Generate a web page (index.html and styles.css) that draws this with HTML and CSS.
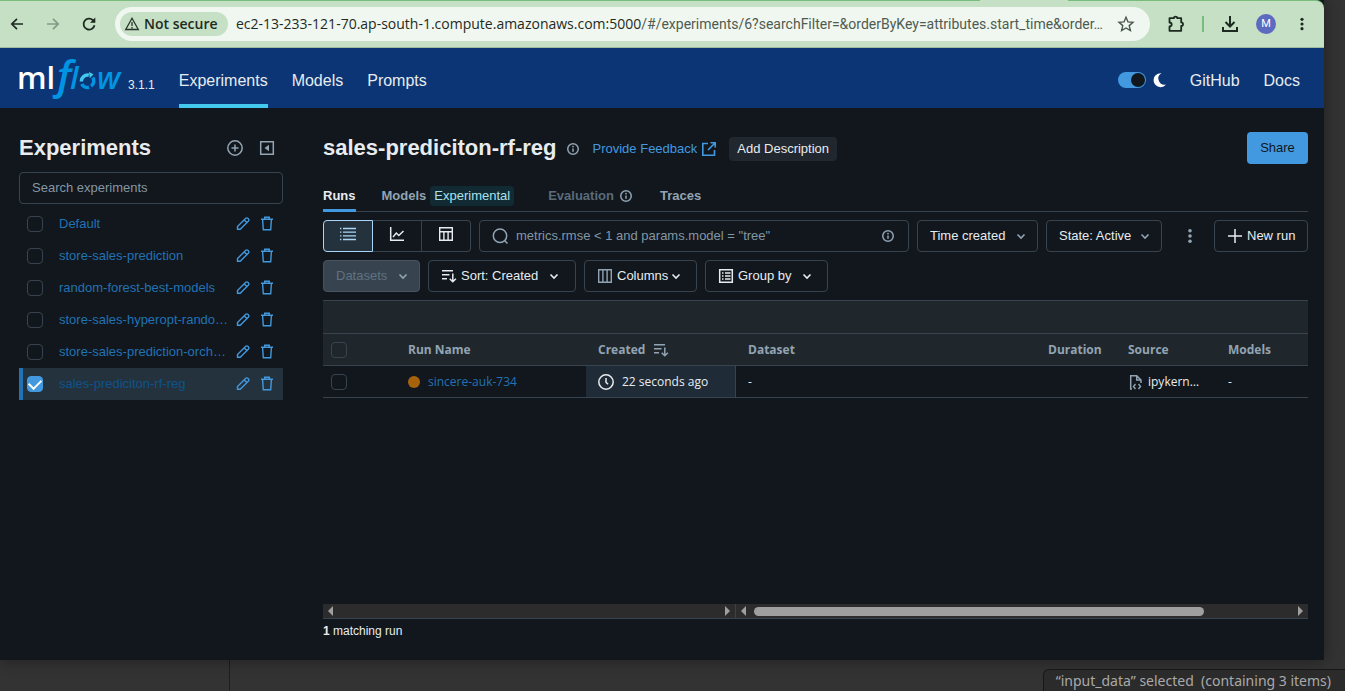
FILE: index.html
```html
<!DOCTYPE html>
<html lang="en">
<head>
<meta charset="utf-8">
<title>sales-prediciton-rf-reg - MLflow</title>
<link rel="stylesheet" href="styles.css">
</head>
<body>
<svg class="sprite" aria-hidden="true">
  <symbol id="i-info" viewBox="0 0 16 16"><circle cx="8" cy="8" r="7" fill="none" stroke="currentColor" stroke-width="2"/><path d="M8 7.200v4.300" stroke="currentColor" stroke-width="2"/><circle cx="8" cy="4.800" r="1.200" fill="currentColor"/></symbol>
  <symbol id="i-pencil" viewBox="0 0 16 16"><path d="M2.500 13.300v-2.700l8.300-8.300a1.400 1.400 0 0 1 2 0l.7.700a1.400 1.400 0 0 1 0 2l-8.300 8.300zM9.300 4l2.700 2.700" fill="none" stroke="currentColor" stroke-width="1.400"/></symbol>
  <symbol id="i-trash" viewBox="0 0 16 16"><path d="M2 3.200h12M5.700 3V1.200h4.600V3M3.600 3.500l.7 10.300h7.400l.7-10.300" fill="none" stroke="currentColor" stroke-width="1.400"/></symbol>
  <symbol id="i-chev" viewBox="0 0 16 16"><path d="M4.500 6.500 8 10l3.500-3.500" fill="none" stroke="currentColor" stroke-width="1.600"/></symbol>
  <symbol id="i-sort" viewBox="0 0 16 16"><path d="M1 2.750h11M1 6.750h7.500M1 10.750h5M11.800 5.500v8M8.700 10.700l3.100 3.100 3.100-3.100" fill="none" stroke="currentColor" stroke-width="1.500"/></symbol>
  <symbol id="i-kebab" viewBox="0 0 16 16"><circle cx="8" cy="2.700" r="1.800" fill="currentColor"/><circle cx="8" cy="8" r="1.800" fill="currentColor"/><circle cx="8" cy="13.300" r="1.800" fill="currentColor"/></symbol>
</svg>

<div class="window">
  <header class="chrome">
    <span class="tab-edge"></span>
    <button class="cbtn" aria-label="Back"><svg viewBox="0 0 16 16" width="16" height="16"><path d="M14 8H3M8 2.800 2.800 8 8 13.200" fill="none" stroke="#1d2a20" stroke-width="1.700"/></svg></button>
    <button class="cbtn" aria-label="Forward"><svg viewBox="0 0 16 16" width="16" height="16"><path d="M2 8h11M8 2.800 13.200 8 8 13.200" fill="none" stroke="#849a86" stroke-width="1.700"/></svg></button>
    <button class="cbtn" aria-label="Reload"><svg viewBox="0 0 16 16" width="16" height="16"><path d="M13.500 9.200A5.500 5.500 0 1 1 12 4.200l1.600 1.800" fill="none" stroke="#1d2a20" stroke-width="1.800"/><path d="M14.300 1.400v5.300H9z" fill="#1d2a20"/></svg></button>
    <div class="omnibox">
      <button class="chip"><svg viewBox="0 0 16 16" width="16" height="16"><path d="M8 2.300 1.700 13.500h12.600zM8 6v4M8 11v1.400" fill="none" stroke="#27332a" stroke-width="1.300"/></svg>Not secure</button>
      <span class="url">ec2-13-233-121-70.ap-south-1.compute.amazonaws.com:5000<span class="path">/#/experiments/6?searchFilter=&amp;orderByKey=attributes.start_time&amp;order…</span></span>
      <button class="cbtn star" aria-label="Bookmark"><svg viewBox="0 0 18 18" width="18" height="18"><path d="m9 2.200 2 4.700 5 .4-3.800 3.300 1.200 5L9 13l-4.400 2.600 1.200-5L2 7.300l5-.4z" fill="none" stroke="#4b564d" stroke-width="1.400"/></svg></button>
    </div>
    <button class="cbtn ext" aria-label="Extensions"><svg viewBox="0 0 20 20" width="20" height="20"><path d="M3.500 4.200h4.400c0-2.200 3.400-2.200 3.400 0h3.900v4.200c2.400 0 2.400 3.500 0 3.500v4.900H3.500v-4.300c2.900-.2 2.900-3.800 0-4z" fill="none" stroke="#1d2a20" stroke-width="1.800" stroke-linejoin="round"/></svg></button>
    <span class="divider"></span>
    <button class="cbtn dl" aria-label="Downloads"><svg viewBox="0 0 20 20" width="20" height="20"><path d="M10 2v10M5.500 8l4.500 4.500L14.500 8M3 13v4h14v-4" fill="none" stroke="#1d2a20" stroke-width="2"/></svg></button>
    <button class="avatar" aria-label="Profile">M</button>
    <button class="cbtn menu" aria-label="Menu"><svg><use href="#i-kebab"/></svg></button>
  </header>

  <nav class="nav">
    <a class="brand" href="#" aria-label="mlflow">
      <svg width="106" height="44" viewBox="0 0 106 44">
        <text class="lg-ml" x="-2" y="33">ml<tspan class="lg-f" x="34">ƒ</tspan><tspan class="lg-l" x="51">l</tspan><tspan class="lg-w" x="78">w</tspan></text>
        <g fill="none" stroke-width="3.500"><path d="M73.800 21.500a6.300 6.300 0 0 1-1.700 8.600" stroke="#0194e2"/><path d="M70 31.200a6.300 6.300 0 0 1-7.300-3.300" stroke="#0194e2"/><path d="M62.300 25.500a6.300 6.300 0 0 1 7.500-6.300" stroke="#43c9ed"/></g>
        <path d="m70 16 4.500 2.200-3.700 4z" fill="#43c9ed"/>
      </svg>
      <span class="version">3.1.1</span>
    </a>
    <a class="navlink active" href="#">Experiments</a>
    <a class="navlink" href="#">Models</a>
    <a class="navlink" href="#">Prompts</a>
    <span class="spacer"></span>
    <label class="theme"><input type="checkbox" class="switch" checked aria-label="Dark theme"><svg viewBox="0 0 16 16" width="16" height="16"><path d="M11.500 1.200A7 7 0 1 0 16 12.600 6.200 6.200 0 0 1 11.500 1.200z" fill="#fff"/></svg></label>
    <a class="navlink" href="#">GitHub</a>
    <a class="navlink" href="#">Docs</a>
  </nav>

  <div class="content">
    <aside class="side">
      <div class="side-head">
        <h2>Experiments</h2>
        <button class="ibtn" aria-label="Create experiment"><svg viewBox="0 0 16 16" width="16" height="16"><circle cx="8" cy="8" r="7.200" fill="none" stroke="currentColor" stroke-width="1.500"/><path d="M8 4.500v7M4.500 8h7" stroke="currentColor" stroke-width="1.500"/></svg></button>
        <button class="ibtn" aria-label="Hide experiments"><svg viewBox="0 0 16 16" width="16" height="16"><path d="M1.700 1.700h12.600v12.600H1.700z" fill="none" stroke="currentColor" stroke-width="1.500"/><path d="M10 4.800v6.400L5.500 8z" fill="currentColor"/></svg></button>
      </div>
      <input class="field" type="text" placeholder="Search experiments" aria-label="Search experiments">
      <ul class="exps">
        <li><input type="checkbox" aria-label="Default"><a href="#">Default</a><button aria-label="Rename"><svg><use href="#i-pencil"/></svg></button><button aria-label="Delete"><svg><use href="#i-trash"/></svg></button></li>
        <li><input type="checkbox" aria-label="store-sales-prediction"><a href="#">store-sales-prediction</a><button aria-label="Rename"><svg><use href="#i-pencil"/></svg></button><button aria-label="Delete"><svg><use href="#i-trash"/></svg></button></li>
        <li><input type="checkbox" aria-label="random-forest-best-models"><a href="#">random-forest-best-models</a><button aria-label="Rename"><svg><use href="#i-pencil"/></svg></button><button aria-label="Delete"><svg><use href="#i-trash"/></svg></button></li>
        <li><input type="checkbox" aria-label="store-sales-hyperopt"><a href="#">store-sales-hyperopt-rando…</a><button aria-label="Rename"><svg><use href="#i-pencil"/></svg></button><button aria-label="Delete"><svg><use href="#i-trash"/></svg></button></li>
        <li><input type="checkbox" aria-label="store-sales-prediction-orch"><a href="#">store-sales-prediction-orch…</a><button aria-label="Rename"><svg><use href="#i-pencil"/></svg></button><button aria-label="Delete"><svg><use href="#i-trash"/></svg></button></li>
        <li class="sel"><input type="checkbox" checked aria-label="sales-prediciton-rf-reg"><a href="#">sales-prediciton-rf-reg</a><button aria-label="Rename"><svg><use href="#i-pencil"/></svg></button><button aria-label="Delete"><svg><use href="#i-trash"/></svg></button></li>
      </ul>
    </aside>

    <main class="main">
      <div class="title">
        <h1>sales-prediciton-rf-reg</h1>
        <svg class="info"><use href="#i-info"/></svg>
        <a class="feedback" href="#">Provide Feedback <svg viewBox="0 0 16 16" width="16" height="16"><path d="M7 2.500H1.800v11.700h11.700V9M9.500 1.800h4.700v4.700M14 2 7 9" fill="none" stroke="currentColor" stroke-width="1.600"/></svg></a>
        <button class="desc">Add Description</button>
        <span class="spacer"></span>
        <button class="share">Share</button>
      </div>
      <div class="tabs" role="tablist">
        <a class="tab on" role="tab" href="#">Runs</a>
        <a class="tab" role="tab" href="#">Models <span class="tag">Experimental</span></a>
        <a class="tab off" role="tab" href="#">Evaluation <svg class="info"><use href="#i-info"/></svg></a>
        <a class="tab" role="tab" href="#">Traces</a>
      </div>
      <div class="bar">
        <div class="seg">
          <button class="on" aria-label="Table view"><svg viewBox="0 0 16 16" width="16" height="16"><path d="M3 2.500h13M3 6.200h13M3 9.800h13M3 13.500h13" stroke="currentColor" stroke-width="1.300"/><path d="M0 2.500h1.400M0 6.200h1.400M0 9.800h1.400M0 13.500h1.400" stroke="currentColor" stroke-width="1.300"/></svg></button>
          <button aria-label="Chart view"><svg viewBox="0 0 16 16" width="16" height="16"><path d="M1.700 1v13.300H15M4 11l3.300-4 2.500 2.500L14.500 5" fill="none" stroke="currentColor" stroke-width="1.500"/></svg></button>
          <button aria-label="Artifact view"><svg viewBox="0 0 16 16" width="16" height="16"><path d="M1.700 1.700h12.600v12.600H1.700zM1.700 5.700h12.600M5.900 5.700v8.600M10.100 5.700v8.600" fill="none" stroke="currentColor" stroke-width="1.400"/></svg></button>
        </div>
        <label class="search">
          <svg viewBox="0 0 16 16" width="16" height="16"><circle cx="8" cy="7.700" r="6.700" fill="none" stroke="currentColor" stroke-width="1.500"/><path d="m12.500 12.500 3 3" stroke="currentColor" stroke-width="1.500"/></svg>
          <input type="text" placeholder='metrics.rmse &lt; 1 and params.model = "tree"' aria-label="Search runs">
          <svg class="info"><use href="#i-info"/></svg>
        </label>
        <span class="pick time"><select aria-label="Time created"><option>Time created</option></select><svg><use href="#i-chev"/></svg></span>
        <span class="pick state"><select aria-label="State"><option>State: Active</option></select><svg><use href="#i-chev"/></svg></span>
        <button class="kebab" aria-label="More"><svg><use href="#i-kebab"/></svg></button>
        <button class="btn new"><svg viewBox="0 0 16 16"><path d="M8 1v14M1 8h14" stroke="currentColor" stroke-width="1.500"/></svg>New run</button>
      </div>
      <div class="bar">
        <button class="btn datasets" disabled>Datasets<svg><use href="#i-chev"/></svg></button>
        <button class="btn sort"><svg><use href="#i-sort"/></svg>Sort: Created<svg class="end"><use href="#i-chev"/></svg></button>
        <button class="btn cols"><svg class="dim" viewBox="0 0 16 16"><path d="M1.700 1.700h12.600v12.600H1.700zM5.900 1.700v12.600M10.100 1.700v12.600" fill="none" stroke="currentColor" stroke-width="1.400"/></svg>Columns<svg class="tight"><use href="#i-chev"/></svg></button>
        <button class="btn group"><svg viewBox="0 0 16 16"><path d="M1.700 1.700h12.600v12.600H1.700z" fill="none" stroke="currentColor" stroke-width="1.500"/><path d="M4 5h1.500M7 5h5.500M4 8h1.500M7 8h5.500M4 11h1.500M7 11h5.500" stroke="currentColor" stroke-width="1.400"/></svg>Group by<svg class="end"><use href="#i-chev"/></svg></button>
      </div>
      <div class="grid">
        <table>
          <colgroup><col class="c-check"><col class="c-name"><col class="c-created"><col class="c-data"><col class="c-dur"><col class="c-src"><col></colgroup>
          <thead>
            <tr class="blank"><td colspan="7"></td></tr>
            <tr><th class="check"><input type="checkbox" aria-label="Select all runs"></th><th>Run Name</th><th><span class="cell">Created<svg><use href="#i-sort"/></svg></span></th><th>Dataset</th><th>Duration</th><th>Source</th><th>Models</th></tr>
          </thead>
          <tbody>
            <tr><td class="check"><input type="checkbox" aria-label="Select run"></td><td><span class="cell"><span class="dot"></span><a href="#">sincere-auk-734</a></span></td><td class="hot"><span class="cell"><svg viewBox="0 0 16 16"><circle cx="8" cy="8" r="7.200" fill="none" stroke="currentColor" stroke-width="1.500"/><path d="M8 4v4.300l2 2" fill="none" stroke="currentColor" stroke-width="1.500"/></svg>22 seconds ago</span></td><td>-</td><td></td><td><span class="cell src"><svg viewBox="0 0 16 16"><path d="M4 15H2.700V1.700h6L13 6v3M8.700 1.700V6H13" fill="none" stroke="currentColor" stroke-width="1.500"/><path d="M7.500 10 5.500 12.500l2 2.500M10.500 10l2 2.500-2 2.500" fill="none" stroke="currentColor" stroke-width="1.400"/></svg>ipykern…</span></td><td>-</td></tr>
          </tbody>
        </table>
      </div>
      <div class="scrolls" aria-hidden="true">
        <div class="sb pinned"><i class="l"></i><span></span><i class="r"></i></div>
        <div class="sb"><i class="l"></i><span><b></b></span><i class="r"></i></div>
      </div>
      <p class="count"><strong>1</strong> matching run</p>
    </main>
  </div>
</div>
<footer class="desk">
  <span class="pane"></span>
  <span class="status">“input_data” selected&nbsp; (containing 3 items)</span>
</footer>
</body>
</html>
```

FILE: styles.css
```css
* { box-sizing: border-box; }
body {
  margin: 0;
  min-height: 100vh;
  display: flex;
  flex-direction: column;
  background: #333;
  color: #e8ecf0;
  font: 13px/20px "Liberation Sans", Arial, sans-serif;
}
button, input, select { font: inherit; color: inherit; }
button { border: 0; padding: 0; background: none; }
a { color: inherit; text-decoration: none; }
svg { flex: none; width: 16px; height: 16px; display: block; }
h1, h2, p, ul { margin: 0; padding: 0; }
h1, h2 { font-size: 22px; line-height: 28px; font-weight: 700; }
.sprite { display: none; }
.spacer { flex: 1; }

.window {
  flex: 1;
  margin-right: 21px;
  display: flex;
  flex-direction: column;
  background: #11171c;
  box-shadow: 0 0 16px rgba(0, 0, 0, 0.4);
  position: relative;
}

/* browser toolbar */
.chrome {
  position: relative;
  height: 48px;
  display: flex;
  align-items: center;
  padding: 0 14px 0 9px;
  background: #c6e0c6;
  border-top: 1px solid #78bd7b;
  border-bottom: 1px solid #9dbb9f;
  border-radius: 0 8px 0 0;
}
.tab-edge { position: absolute; top: -1px; right: 256px; width: 88px; height: 1px; background: #c6e0c6; }
.cbtn { display: flex; align-items: center; justify-content: center; width: 16px; height: 24px; margin-right: 20px; }
.cbtn svg { width: auto; height: auto; }
.cbtn.menu { margin-right: 0; color: #1d2a20; }
.menu svg { width: 14px; height: 14px; }
.omnibox {
  flex: 1;
  min-width: 0;
  height: 34px;
  margin-right: 16px;
  margin-left: -2px;
  padding: 0 14px 0 5px;
  display: flex;
  align-items: center;
  border-radius: 17px;
  background: #f0f7f0;
  color: #1f2a22;
  font-family: "Open Sans", sans-serif;
  font-size: 14px;
}
.chip {
  width: 108px;
  height: 24px;
  display: flex;
  align-items: center;
  gap: 4px;
  padding-left: 4px;
  margin-right: 8px;
  border-radius: 12px;
  background: #c6e0c6;
  font-weight: 600;
  white-space: nowrap;
}
.url { flex: 1; min-width: 0; overflow: hidden; white-space: nowrap; }
.url .path { color: #4f5b51; font-family: Roboto, sans-serif; }
.omnibox .star { width: 20px; margin: 0; }
.ext { width: 20px; margin-right: 16px; }
.divider { width: 2px; height: 16px; margin-right: 18px; background: #78bd7b; }
.dl { margin-right: 18px; }
.avatar { width: 20px; height: 20px; margin-right: 18px; border-radius: 50%; background: #5c6bc0; color: #fff; font: 11px/20px Roboto, sans-serif; }

/* application header */
.nav {
  height: 60px;
  display: flex;
  gap: 24px;
  padding: 0 24px 0 19px;
  background: #0b3574;
  font-size: 16px;
}
.brand { display: flex; align-items: center; gap: 3px; }
.brand svg { width: 106px; height: 44px; overflow: visible; }
.version { padding-top: 14px; font-size: 12px; }
.lg-ml { font: 600 31px "Open Sans", sans-serif; fill: #fff; }
.lg-f { font: italic 600 42px "Open Sans", sans-serif; fill: #0194e2; }
.lg-l { font: italic 600 31px "Open Sans", sans-serif; fill: #0194e2; }
.lg-w { font: italic 600 31px "Open Sans", sans-serif; fill: #0194e2; }
.navlink { height: 60px; padding-top: 5px; line-height: 56px; border-bottom: 4px solid transparent; }
.navlink.active { border-color: #43c9ed; }
.theme { display: flex; align-items: center; gap: 4px; padding-top: 4px; }
.switch {
  appearance: none;
  width: 28px;
  height: 16px;
  margin: 0;
  padding: 1px;
  border-radius: 8px;
  background: #4299e0;
  display: flex;
  justify-content: flex-end;
}
.switch::after { content: ""; width: 14px; height: 14px; border-radius: 50%; background: #11171c; }

.content { flex: 1; display: flex; gap: 40px; padding: 24px 16px 19px 19px; }

/* experiment list */
.side { width: 264px; flex: none; }
.side-head { display: flex; align-items: center; height: 32px; gap: 16px; padding-right: 8px; margin-bottom: 8px; }
.side-head h2 { flex: 1; }
.ibtn { color: #92a4b3; }
.field {
  width: 100%;
  height: 32px;
  padding: 0 12px 2px;
  border: 1px solid #37444f;
  border-radius: 4px;
  background: none;
}
.field::placeholder { color: #8396a5; opacity: 1; }
input[type="checkbox"]:not(.switch) {
  appearance: none;
  flex: none;
  width: 16px;
  height: 16px;
  margin: 0;
  border: 1px solid #37444f;
  border-radius: 4px;
  display: grid;
  place-items: center;
}
.sel input[type="checkbox"]:checked { background: #4299e0; border-color: #4299e0; }
.sel input[type="checkbox"]:checked::after {
  content: "";
  width: 10px;
  height: 6px;
  margin-bottom: 3px;
  border: solid #fff;
  border-width: 0 0 2px 2px;
  rotate: -45deg;
}
.exps { list-style: none; padding-top: 4px; }
.exps li { display: flex; align-items: center; height: 32px; padding: 0 8px 0 4px; border-left: 4px solid transparent; }
.exps a { flex: 1; min-width: 0; margin-left: 16px; color: #2272b4; white-space: nowrap; overflow: hidden; }
.exps button { margin-left: 8px; color: #4299e0; }
.exps .sel { background: #24323e; border-color: #2272b4; }
.exps .sel a { color: #0e538b; }

/* run page */
.main { flex: 1; min-width: 0; display: flex; flex-direction: column; }
.title { display: flex; align-items: center; height: 32px; }
.info { width: 12px; height: 12px; color: #92a4b3; }
.title .info { margin: 2px 14px 0 10px; }
.feedback { display: flex; align-items: center; gap: 4px; padding-top: 2px; color: #4299e0; }
.desc { height: 24px; margin: 2px 0 0 12px; padding: 0 8px; border-radius: 4px; background: #20272e; }
.share { width: 61px; height: 32px; border-radius: 4px; background: #4299e0; color: #11171c; }
.tabs { display: flex; height: 32px; margin: 16px 0 8px; border-bottom: 1px solid #37444f; font-weight: 700; color: #92a4b3; }
.tab { display: flex; align-items: center; gap: 4px; height: 32px; padding-top: 2px; margin-right: 26px; border-bottom: 3px solid transparent; }
.tab.on { color: #e8ecf0; border-color: #4299e0; }
.tab:nth-child(2) { margin-right: 34px; }
.tab.off { margin-right: 28px; color: #5a6b7a; gap: 6px; }
.tag { padding: 0 4px; border-radius: 4px; background: #122a33; color: #a9e2ee; font-weight: 400; }
.bar { display: flex; gap: 8px; margin-bottom: 8px; }
.seg { display: flex; width: 148px; height: 32px; }
.seg button { flex: 1; display: flex; justify-content: center; padding-top: 5px; border: 1px solid #37444f; border-left-width: 0; }
.seg button:last-child { border-radius: 0 4px 4px 0; }
.seg .on { background: #24323e; border: 1px solid #a9d6f7; border-radius: 4px 0 0 4px; color: #a9d6f7; }
.search {
  flex: 1;
  min-width: 0;
  height: 32px;
  display: flex;
  align-items: center;
  gap: 8px;
  padding: 0 14px 0 12px;
  border: 1px solid #37444f;
  border-radius: 4px;
  color: #92a4b3;
}
.search input { flex: 1; min-width: 0; border: 0; padding: 0; background: none; outline: 0; }
.search input::placeholder { color: #8396a5; opacity: 1; }
.pick { display: grid; height: 32px; color: #e8ecf0; }
.pick select {
  grid-area: 1 / 1;
  appearance: none;
  width: 100%;
  padding: 0 12px;
  border: 1px solid #37444f;
  border-radius: 4px;
  background: #11171c;
}
.pick svg { grid-area: 1 / 1; place-self: center end; margin-right: 9px; color: #92a4b3; pointer-events: none; }
.time { width: 121px; }
.state { width: 116px; }
.kebab { width: 36px; padding-left: 12px; color: #92a4b3; }
.btn {
  height: 32px;
  display: flex;
  align-items: center;
  gap: 4px;
  padding: 0 12px;
  border: 1px solid #37444f;
  border-radius: 4px;
  white-space: nowrap;
}
.btn .end { margin-left: 4px; }
.btn .dim { color: #92a4b3; }
.btn .tight { margin-left: -4px; }
.new { width: 94px; }
.datasets { width: 97px; justify-content: space-between; padding-right: 8px; background: #37444f; border-color: #46535f; color: #5f7281; }
.datasets svg { color: #92a4b3; }
.sort { width: 148px; }
.cols { width: 113px; }
.group { width: 123px; }

.grid { flex: 1; font-family: "Open Sans", sans-serif; font-size: 12px; }
table { width: 100%; table-layout: fixed; border-collapse: collapse; }
.c-check { width: 73px; }
.c-name { width: 190px; }
.c-created { width: 150px; }
.c-data { width: 300px; }
.c-dur { width: 80px; }
.c-src { width: 100px; }
thead { background: #20272c; color: #92a4b3; }
tr { height: 32px; border-bottom: 1px solid #37444f; }
.blank { height: 33px; border-top: 1px solid #37444f; }
th, td { padding: 0 0 0 12px; text-align: left; white-space: nowrap; }
th { font-weight: 700; }
.check { padding-left: 8px; }
.cell { display: flex; align-items: center; gap: 8px; }
.src { gap: 4px; }
.src svg { color: #92a4b3; }
td a { color: #2272b4; }
.dot { width: 12px; height: 12px; border-radius: 50%; background: #a6630c; }
.hot { background: #1f2b36; box-shadow: inset -1px 0 #37444f; }

.scrolls { display: flex; height: 15px; border-bottom: 1px solid #37444f; background: #2c2c2c; }
.sb { flex: 1; display: flex; align-items: center; padding: 0 5px; }
.sb.pinned { flex: none; width: 413px; border-right: 1px solid #37444f; }
.sb span { flex: 1; padding: 0 8px; }
.sb b { display: block; width: 84%; height: 9px; border-radius: 5px; background: #9f9f9f; }
.sb i { border: 5px solid transparent; border-width: 5px 0; }
.sb .l { border-right: 5px solid #9f9f9f; }
.sb .r { border-left: 5px solid #9f9f9f; }
.count { padding-top: 2px; font-size: 12px; }

/* desktop behind the window */
.desk { height: 31px; display: flex; justify-content: space-between; align-items: flex-end; }
.pane { width: 230px; height: 31px; border-right: 1px solid #1f1f1f; }
.status {
  position: relative;
  height: 22px;
  padding: 0 14px 0 12px;
  border: 1px solid #171717;
  border-width: 1px 0 0 1px;
  border-radius: 6px 0 0 0;
  background: #2b2b2b;
  color: #a9a9a9;
  font: 14px/22px "Noto Sans", sans-serif;
}
```
